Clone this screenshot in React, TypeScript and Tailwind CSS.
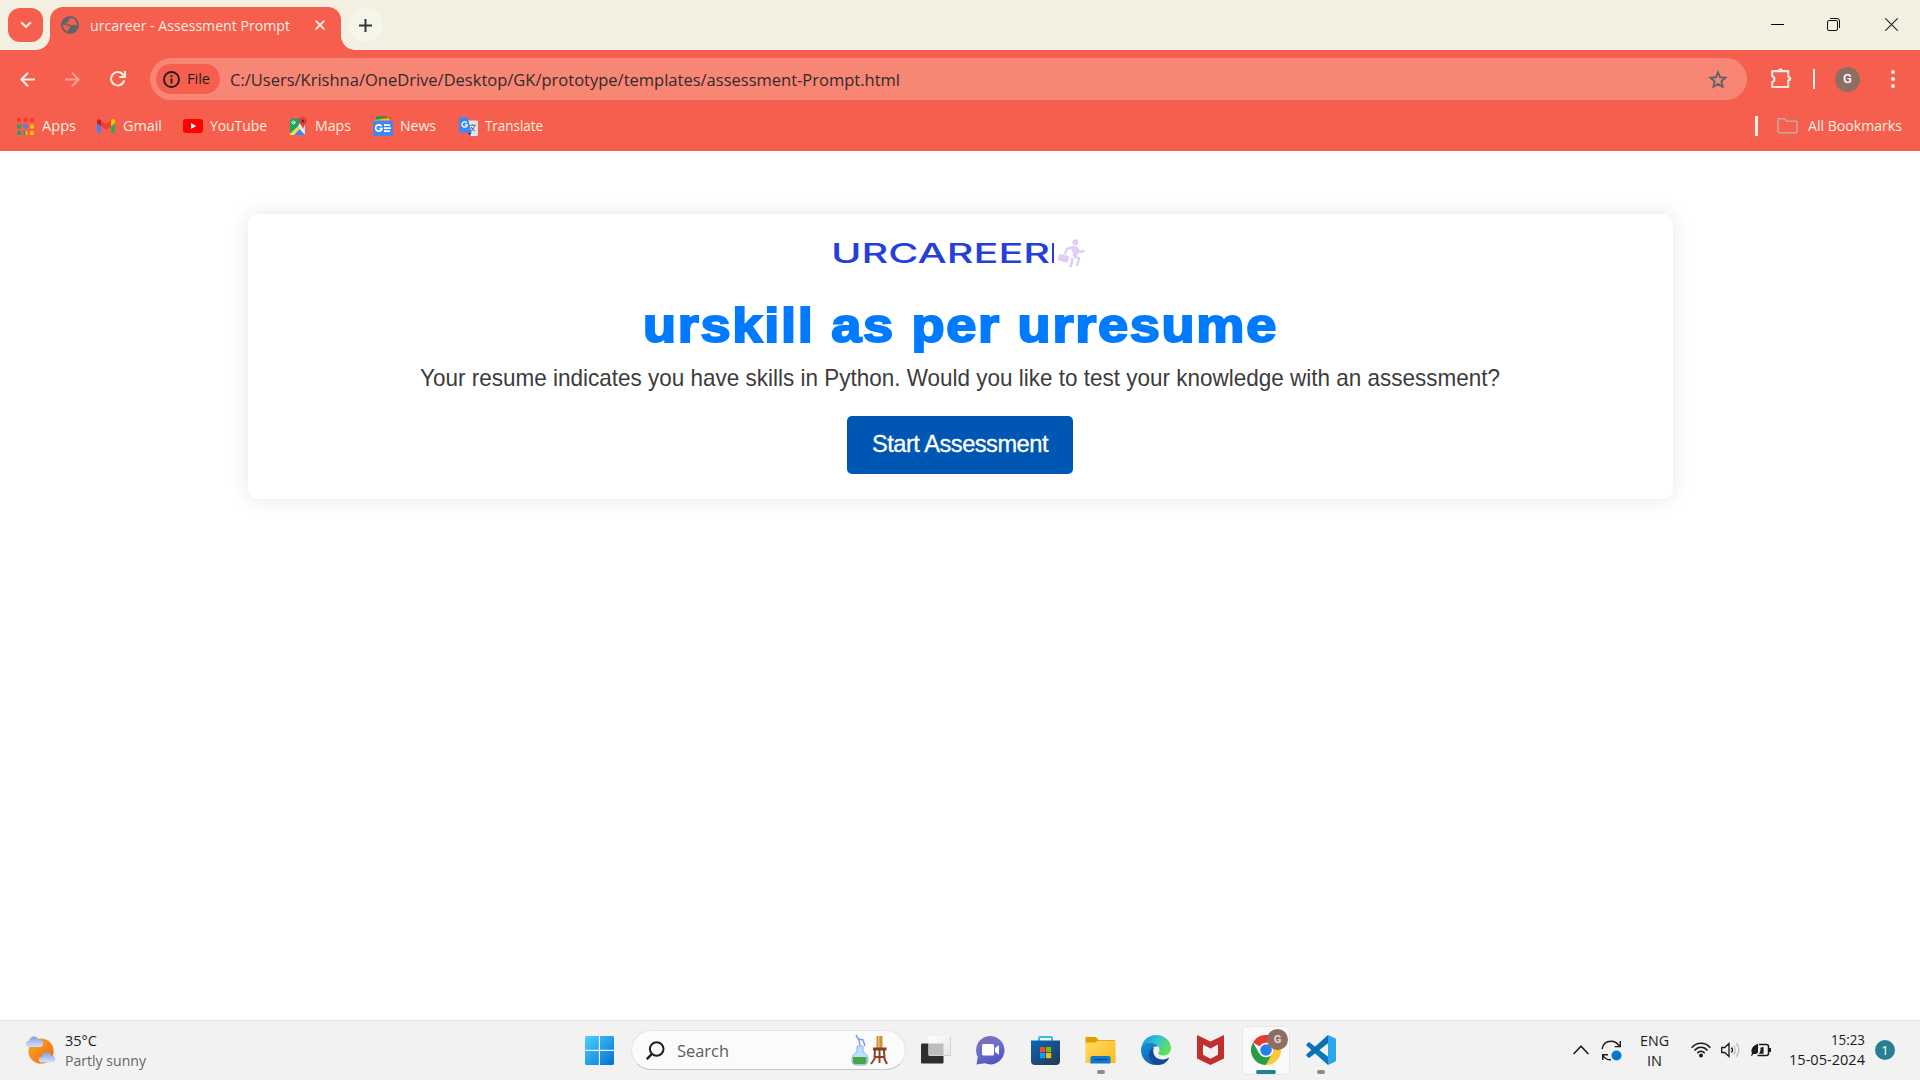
import { useLayoutEffect, useRef, useState } from "react";
import type { ReactNode } from "react";

/* Single line of text, stretched or condensed to the width of its box. */
function Fit({ children, className }: { children: ReactNode; className: string }) {
  const outer = useRef<HTMLSpanElement>(null);
  const inner = useRef<HTMLSpanElement>(null);
  const [scale, setScale] = useState(1);
  useLayoutEffect(() => {
    if (outer.current && inner.current) {
      setScale(outer.current.offsetWidth / inner.current.getBoundingClientRect().width);
    }
  }, []);
  return (
    <span ref={outer} className={`block shrink-0 whitespace-nowrap ${className}`}>
      <span ref={inner} className="inline-block origin-left" style={{ transform: `scaleX(${scale})` }}>
        {children}
      </span>
    </span>
  );
}

function TabStrip() {
  return (
    <div className="flex h-[50px] items-start bg-[#f3f0e1] pl-2">
      <button className="mt-2 flex h-[34px] w-[35px] items-center justify-center rounded-[12px] bg-[#f65f4d]">
        <svg width="12" height="8" viewBox="0 0 12 8" fill="none" stroke="#fbeee2" strokeWidth="2.2">
          <path d="M1.2 1.2 6 6l4.8-4.8" />
        </svg>
      </button>
      <div className="relative ml-[7px] mt-[7px] flex h-[43px] w-[291px] items-center rounded-t-[13px] bg-[#f65f4d] pb-[7px] pl-[11px]">
        <div className="absolute bottom-0 -left-[14px] h-[14px] w-[14px] bg-[radial-gradient(circle_at_0_0,transparent_13.5px,#f65f4d_14.2px)]" />
        <div className="absolute bottom-0 -right-[14px] h-[14px] w-[14px] bg-[radial-gradient(circle_at_100%_0,transparent_13.5px,#f65f4d_14.2px)]" />
        <svg width="18" height="18" viewBox="0 0 18 18">
          <circle cx="9" cy="9" r="9" fill="#5f6368" />
          <path d="M2 8.2 6.2 9.4c1.6.2 2.8.6 2.8 2.1 0 1.4-1.2 1.6-1.9 2.2-.5.5-.5 1.6-.4 2.1C3.8 14.700 2 12 2 8.200ZM10 2.100c-.6.9-2 .8-2.400 1.600-.5 1 .3 1.500-.2 2.200-.6.700-2 .4-2.100 1.500 0 .8 1.400.9 2.700.9 1.200 0 1.500.9 2.500 1 1 .1 1.500-.7 2.600-.6 1.200.1 1.300 1.100 2.600 1.200.8-4-2.100-7.600-5.700-7.800Z" fill="#f65f4d" />
        </svg>
        <Fit className="ml-[11px] mt-[2px] w-[200px] font-['Open_Sans',sans-serif] text-[14.5px] leading-5 text-[#fbeee2]">urcareer - Assessment Prompt</Fit>
        <svg className="ml-[25px]" width="10" height="10" viewBox="0 0 10 10" stroke="#fbeee2" strokeWidth="1.9">
          <path d="m.6.6 8.800 8.800M9.400.6.6 9.400" />
        </svg>
      </div>
      <button className="ml-[7px] mt-2 flex h-[34px] w-[35px] items-center justify-center rounded-full bg-[#f6f5ea]">
        <svg width="13" height="13" viewBox="0 0 13 13" stroke="#2c3640" strokeWidth="2">
          <path d="M6.500 0v13M0 6.500h13" />
        </svg>
      </button>
      <div className="ml-auto flex h-[49px] items-center pr-[22px]">
        <svg width="13" height="13" viewBox="0 0 13 13" stroke="#000" shapeRendering="crispEdges">
          <path d="M0 6.500h13" />
        </svg>
        <svg className="ml-[43px]" width="13" height="13" viewBox="0 0 13 13" fill="none" stroke="#111">
          <rect x=".5" y="2.500" width="10" height="10" rx="1.500" />
          <path d="M3 .5h7a2.500 2.500 0 0 1 2.500 2.500v7" />
        </svg>
        <svg className="ml-[45px]" width="13" height="13" viewBox="0 0 13 13" stroke="#222" strokeWidth="1.1">
          <path d="m.3.3 12.400 12.400M12.700.3.3 12.700" />
        </svg>
      </div>
    </div>
  );
}

function Toolbar() {
  return (
    <div className="flex h-[58px] items-center bg-[#f65f4d] pl-[20px] pr-[25px]">
      <svg width="15" height="15" viewBox="0 0 15 15" fill="none" stroke="#fbeee2" strokeWidth="2">
        <path d="M15 7.500H1.500M8 .8 1.400 7.500 8 14.200" />
      </svg>
      <svg className="ml-[30px]" width="15" height="15" viewBox="0 0 15 15" fill="none" stroke="#f9a196" strokeWidth="2">
        <path d="M0 7.500h13.500M7 .8l6.600 6.700L7 14.200" />
      </svg>
      <svg className="ml-[30px]" width="16" height="16" viewBox="0 0 16 16" fill="none" stroke="#fbeee2" strokeWidth="2">
        <path d="M14.300 9.200A6.700 6.700 0 1 1 13 3.500l1 1.200" />
        <path d="M15 0v6H9.200" />
      </svg>
      <div className="ml-[24px] flex h-[42px] w-[1597px] items-center rounded-full bg-[#f88675] pl-[6px]">
        <div className="flex h-[30px] w-[64px] items-center rounded-full bg-[#f65f4d] pl-[7px]">
          <svg width="17" height="17" viewBox="0 0 17 17" fill="none" stroke="#1f1f1f" strokeWidth="1.900">
            <circle cx="8.500" cy="8.500" r="7.500" />
            <path d="M8.500 7.500v5M8.500 4.300v1.900" />
          </svg>
          <Fit className="ml-[7px] w-[23px] font-['Open_Sans',sans-serif] text-[14.5px] leading-5 text-[#1f1f1f]">File</Fit>
        </div>
        <Fit className="ml-[10px] mt-[1px] w-[670px] font-['Open_Sans',sans-serif] text-[17px] leading-6 text-[#332a2e]">C:/Users/Krishna/OneDrive/Desktop/GK/prototype/templates/assessment-Prompt.html</Fit>
        <svg className="ml-auto mr-[19px]" width="20" height="19" viewBox="0 0 20 19" fill="none" stroke="#5f6368" strokeWidth="1.900">
          <path d="m10 2.300 2.100 5 5.400.5-4.100 3.600 1.200 5.300-4.600-2.800-4.600 2.800 1.200-5.300-4.100-3.600 5.400-.5Z" />
        </svg>
      </div>
      <svg className="mb-[2px] ml-[24px]" width="22" height="22" viewBox="0 0 22 22" fill="none" stroke="#f4e6e4" strokeWidth="2.200" strokeLinejoin="round">
        <path d="M1.200 4.200h16v5.500a2 2 0 0 1 0 3.900v6.400h-16v-5a3 3 0 0 0 0-5.800Z" />
        <path d="M7.200 3.500a2.300 2.300 0 0 1 4.600 0ZM18 9.400a2.300 2.300 0 0 1 0 4.600Z" fill="#f4e6e4" stroke="none" />
      </svg>
      <div className="ml-[20px] h-[20px] w-[2px] bg-[#fbeee2]" />
      <div className="ml-[20px] flex h-[25px] w-[25px] items-center justify-center rounded-full bg-[#8d6e63] font-['Roboto',sans-serif] text-[13px] font-medium text-white">G</div>
      <svg className="ml-auto" width="4" height="18" viewBox="0 0 4 18" fill="#fbeee2">
        <circle cx="2" cy="2" r="2" />
        <circle cx="2" cy="9" r="2" />
        <circle cx="2" cy="16" r="2" />
      </svg>
    </div>
  );
}

const label = "font-['Open_Sans',sans-serif] text-[14.5px] leading-5 text-[#fdf0e0]";

function BookmarksBar() {
  return (
    <div className="flex h-[43px] items-center bg-[#f65f4d] pb-[7px] pl-[17px] pr-[18px]">
      <svg width="17" height="17" viewBox="0 0 17 17">
        <path d="M0 0h4v4H0zM6.500 0h4v4h-4zM13 0h4v4h-4z" fill="#f53b35" />
        <path d="M0 6.500h4v4H0z" fill="#1ea362" />
        <path d="M6.500 6.500h4v4h-4z" fill="#4285f4" />
        <path d="M13 6.500h4v4h-4z" fill="#fbbc04" />
        <path d="M0 13h4v4H0zM6.500 13h4v4h-4z" fill="#1ea362" />
        <path d="M13 13h4v4h-4zM8.500 13h2v4h-2z" fill="#fbbc04" />
      </svg>
      <Fit className={`${label} ml-[8px] w-[34px]`}>Apps</Fit>
      <svg className="ml-[21px]" width="18" height="14" viewBox="0 0 18 14">
        <path d="M0 3v9.500c0 .9.500 1.500 1.300 1.500H4V5Z" fill="#4285f4" />
        <path d="M18 3v9.500c0 .9-.5 1.500-1.300 1.500H14V5Z" fill="#34a853" />
        <path d="M14 1.200V7.300l4-3V2.200C18 .3 16-.7 14.500.700Z" fill="#fbbc04" />
        <path d="M4 1.200 9 5l5-3.800v6.100L9 11 4 7.300Z" fill="#ea4335" />
        <path d="M0 2.200v2.100l4 3V1.200L3.500.7C2-.5 0 .3 0 2.200Z" fill="#c5221f" />
      </svg>
      <Fit className={`${label} ml-[8px] w-[39px]`}>Gmail</Fit>
      <svg className="ml-[21px]" width="20" height="14" viewBox="0 0 20 14">
        <rect width="20" height="14" rx="3.200" fill="#f00" />
        <path d="m8 4 5.200 3L8 10Z" fill="#fff" />
      </svg>
      <Fit className={`${label} ml-[7px] w-[57px]`}>YouTube</Fit>
      <svg className="ml-[22px]" width="18" height="19" viewBox="0 0 18 19">
        <path d="M2 2h12l2 2v13l-1 1H1V3Z" fill="#e8eaed" />
        <path d="M2 1.500h11L9 9.500l-8 7.500V3Z" fill="#1ea362" />
        <path d="M1 17 9 9.500l2 2L4 18H2Z" fill="#fdd835" />
        <path d="M5 18 10.500 12l5.500 6Z" fill="#4285f4" />
        <path d="M13.800 0A4 4 0 0 1 18 4c0 2.500-3.400 4-4 8.500-.8-4.500-4.200-6-4.200-8.500A4 4 0 0 1 13.800 0Z" fill="#db4437" />
        <circle cx="13.900" cy="4" r="1.500" fill="#7b231e" />
        <path d="M6.800 5.200h-2v1h.9A1.500 1.500 0 1 1 5.500 4.600" fill="none" stroke="#fff" strokeWidth=".9" />
      </svg>
      <Fit className={`${label} ml-[8px] w-[36px]`}>Maps</Fit>
      <svg className="ml-[22px]" width="20" height="20" viewBox="0 0 20 20">
        <path d="M3 .5 14 0v7H3Z" fill="#0c9d58" />
        <path d="m8 2 10-1-1 6H8Z" fill="#ea4335" />
        <path d="m1 4 15-2 2 5H1Z" fill="#fbbc04" />
        <rect y="4.500" width="20" height="15.500" rx="1.500" fill="#4285f4" />
        <path d="M8.500 10.200A3.200 3.200 0 1 0 9 12.500H6.300M11 9.200h6M11 12.200h7M11 15.200h6" fill="none" stroke="#fff" strokeWidth="1.700" />
      </svg>
      <Fit className={`${label} ml-[7px] w-[36px]`}>News</Fit>
      <svg className="ml-[23px]" width="19" height="19" viewBox="0 0 19 19">
        <path d="M7 3.500h11a1 1 0 0 1 1 1V18a1 1 0 0 1-1 1h-7Z" fill="#e4e6ea" />
        <path d="M10.500 8.200h6.500M13.700 7v1.200M15.800 8.500c-.4 2.500-2 4.200-4 5.500M12 10c.8 1.800 2 3 4 4" fill="none" stroke="#6b7780" strokeWidth="1.100" />
        <path d="M1 0h7.500l4 15.500H1a1 1 0 0 1-1-1V1a1 1 0 0 1 1-1Z" fill="#4285f4" />
        <path d="M8.500 15.500h4L11 19Z" fill="#174ea6" />
        <path d="M7.700 6A2.600 2.600 0 1 0 8.200 7.900H5.800" fill="none" stroke="#fff" strokeWidth="1.300" />
      </svg>
      <Fit className={`${label} ml-[7px] w-[58px]`}>Translate</Fit>
      <div className="ml-auto h-[20px] w-[3px] bg-[#fdf0e0]" />
      <svg className="ml-[19px]" width="21" height="16" viewBox="0 0 21 16" fill="none" stroke="#c3aa9f" strokeWidth="1.500">
        <path d="M1 1.800a1 1 0 0 1 1-1h5.500l2 2.500H19a1 1 0 0 1 1 1v9.400a1 1 0 0 1-1 1H2a1 1 0 0 1-1-1Z" />
      </svg>
      <Fit className={`${label} ml-[10px] w-[94px]`}>All Bookmarks</Fit>
    </div>
  );
}

function AssessmentCard() {
  return (
    <main className="ml-[248px] flex h-[285px] w-[1425px] flex-col items-center rounded-[10px] bg-white pr-px shadow-[0_0_20px_rgba(0,0,0,0.1)]">
      <div className="mr-[4px] mt-[24px] flex h-[30px] items-center">
        <Fit className="mt-[2px] w-[219px] font-['Inter',sans-serif] text-[27px] font-medium leading-[30px] text-[#2440d8]">URCAREER</Fit>
        <div className="ml-[2px] h-[20px] w-[2px] bg-[#2440d8]" />
        <svg className="ml-[4px]" width="27" height="29" viewBox="0 0 27 29" fill="#dfcff8">
          <circle cx="17.400" cy="3.200" r="2.900" />
          <rect x=".3" y="16.200" width="10.500" height="6.500" rx="1" transform="rotate(14 6 19)" />
          <path d="M5 16.500c0-2 3.500-1.500 3.500.6" fill="none" stroke="#dfcff8" />
          <path d="m13.500 9.500 4-.8 2 3.300-3.500 5.500" stroke="#dfcff8" strokeWidth="3.800" strokeLinejoin="round" />
          <path d="m15 8.300-6 1.400L7 14.500M18 9l3.300 3.800 5.200-.8M15.500 17l5.500 2.500-2 7.500M14 19v4.500l-2 4.800" fill="none" stroke="#dfcff8" strokeWidth="2.500" strokeLinejoin="round" />
        </svg>
      </div>
      <h1 className="mt-[26px]">
        <Fit className="w-[635px] font-['Liberation_Sans',Arial,sans-serif] text-[48px] font-bold leading-[64px] tracking-[1.5px] text-[#007bff] [-webkit-text-stroke:2px_#007bff]">urskill as per urresume</Fit>
      </h1>
      <p className="mt-[4px]">
        <Fit className="w-[1080px] font-['Liberation_Sans',Arial,sans-serif] text-[24px] leading-[32px] text-[#3c3c3c]">
          Your resume indicates you have skills in Python. Would you like to test your knowledge with an assessment?
        </Fit>
      </p>
      <button className="mt-[22px] flex h-[58px] w-[226px] items-center justify-center rounded-[5px] bg-[#0056b3] pb-[2px]">
        <Fit className="w-[176px] text-left font-['Liberation_Sans',Arial,sans-serif] text-[24px] leading-[28px] tracking-[-0.5px] text-white [-webkit-text-stroke:0.3px_#fff]">Start Assessment</Fit>
      </button>
    </main>
  );
}

function Taskbar() {
  return (
    <footer className="flex h-[60px] items-center border-t border-[#e2e2e2] bg-[#f2f2f2] pb-px font-['Open_Sans',sans-serif] text-[14.5px] leading-5 text-[#1b1b1b]">
      <svg className="ml-[26px]" width="30" height="28" viewBox="0 0 30 28">
        <defs>
          <linearGradient id="sun" x1="0" y1="0" x2="1" y2="1"><stop stopColor="#f6b02c" /><stop offset="1" stopColor="#f0620f" /></linearGradient>
          <linearGradient id="cloud" x1="0" y1="0" x2="0" y2="1"><stop stopColor="#7f9fe0" /><stop offset="1" stopColor="#d3e2fa" /></linearGradient>
        </defs>
        <circle cx="15" cy="15" r="12.600" fill="url(#sun)" />
        <path d="M3 11a3 3 0 0 1-.2-6C4 1.500 5.800.5 8 .5c2.600 0 4.200 1.500 4.700 3.600A3.500 3.500 0 0 1 14.500 11Z" fill="url(#cloud)" />
        <path d="M15.500 26.500a2.800 2.800 0 0 1 .2-5.600c.8-3.500 2.600-4.900 5-4.900 2.300 0 4 1.500 4.500 3.900 4.800-.5 5.800 5.600 1.600 6.600Z" fill="url(#cloud)" />
      </svg>
      <div className="ml-[9px] w-[82px] pt-[2px]">
        <Fit className="w-[32px]">35°C</Fit>
        <Fit className="w-[81px] text-[#666]">Partly sunny</Fit>
      </div>

      <svg className="ml-[438px]" width="29" height="29" viewBox="0 0 29 29">
        <defs>
          <linearGradient id="win" x1="0" y1="0" x2="29" y2="29" gradientUnits="userSpaceOnUse"><stop stopColor="#4fd0ff" /><stop offset="1" stopColor="#0070d0" /></linearGradient>
        </defs>
        <path d="M1 0h12.800v13.800H0V1ZM15 0h13l1 1v12.800H15ZM0 15h13.800v14H1l-1-1ZM15 15h14v13l-1 1H15Z" fill="url(#win)" />
      </svg>
      <div className="ml-[17px] flex h-[40px] w-[275px] items-center rounded-full border border-[#e3e3e3] border-b-[#c6c6c6] bg-[#fbfbfb]">
        <svg className="ml-[14px]" width="19" height="19" viewBox="0 0 19 19" fill="none" stroke="#1f1f1f" strokeWidth="2">
          <circle cx="10.700" cy="8" r="6.800" />
          <path d="M5.800 13 .8 18.200" strokeWidth="2.500" />
        </svg>
        <Fit className="ml-[12px] mt-[1px] w-[52px] text-[17px] leading-6 text-[#5c5c5c]">Search</Fit>
        <svg className="ml-auto mr-[17px]" width="37" height="32" viewBox="0 0 37 32">
          <path d="m5 1 3 5 1 6M8 5l4 1 2 6" fill="none" stroke="#7aa3e8" strokeWidth="1.500" />
          <path d="M6 12h6v6c4 2 5 5 5 8s-1.500 5-4 5H5c-2.500 0-4-2-4-5s1-6 5-8Z" fill="#b9e4f7" stroke="#8bb5ef" />
          <path d="M2 23h13.500v5a2 2 0 0 1-2 2H4a2 2 0 0 1-2-2Z" fill="#4aa544" />
          <path d="M25.500 2h6v12h-6Z" fill="#c6953e" />
          <path d="M27 2h1.500v12H27Z" fill="#e5bf6a" />
          <path d="M22 13.500h13.500v3H22Z" fill="#83401f" />
          <path d="m24 16-.5 9-3.500 5M28.500 16v13M33 16l.5 9 2.500 5M23.500 23h10" fill="none" stroke="#8d4420" strokeWidth="2" />
        </svg>
      </div>
      <svg className="ml-[15px]" width="30" height="28" viewBox="0 0 30 28">
        <defs>
          <linearGradient id="pane" x1="0" y1="0" x2="1" y2="1"><stop stopColor="#fff" /><stop offset="1" stopColor="#e6e6e6" /></linearGradient>
        </defs>
        <rect y="7.500" width="22.500" height="20" rx="1" fill="#2e2e2e" />
        <rect x="7.500" width="22" height="19.500" rx="1" fill="url(#pane)" />
        <rect x="7.500" y="7.500" width="15" height="12" fill="#bdbdbd" />
        <path d="M29.500 1v18.500H8" fill="none" stroke="#d0d0d0" />
      </svg>
      <svg className="ml-[25px]" width="29" height="29" viewBox="0 0 29 29">
        <defs>
          <linearGradient id="chat" x1="0" y1="0" x2=".4" y2="1"><stop stopColor="#8e62a7" /><stop offset=".45" stopColor="#6d73cc" /><stop offset="1" stopColor="#5655c4" /></linearGradient>
        </defs>
        <path d="M14.500 0a14.200 14.200 0 1 1-5.700 27.300L.5 28.500 1.800 21A14.200 14.200 0 0 1 14.500 0Z" fill="url(#chat)" />
        <rect x="6" y="8" width="12" height="11.500" rx="1.500" fill="#fff" />
        <path d="m19 12 4-2.800v9.500l-4-2.800Z" fill="#fff" />
      </svg>
      <svg className="ml-[26px]" width="29" height="29" viewBox="0 0 29 29">
        <defs>
          <linearGradient id="store" x1="0" y1="0" x2=".8" y2="1"><stop stopColor="#0b67b8" /><stop offset="1" stopColor="#243a5e" /></linearGradient>
        </defs>
        <path d="M8 5V2a1 1 0 0 1 1-1h11a1 1 0 0 1 1 1v3" fill="none" stroke="#32bdf0" strokeWidth="2" />
        <path d="M0 4.500h29V25a4 4 0 0 1-4 4H4a4 4 0 0 1-4-4Z" fill="url(#store)" />
        <path d="M9 11h5.200v5.200H9Z" fill="#f25022" />
        <path d="M15 11h5.200v5.200H15Z" fill="#7fba00" />
        <path d="M9 17h5.200v5.200H9Z" fill="#00a4ef" />
        <path d="M15 17h5.200v5.200H15Z" fill="#ffb900" />
      </svg>
      <div className="ml-[25px] flex h-[48px] flex-col items-center justify-end">
        <svg width="31" height="27" viewBox="0 0 31 27">
          <defs>
            <linearGradient id="folder" x1="0" y1="0" x2="1" y2="1"><stop stopColor="#ffdb65" /><stop offset="1" stopColor="#fbb917" /></linearGradient>
          </defs>
          <path d="M1 0h10l2.500 3H30v5H.500V1Z" fill="#dfa000" />
          <path d="M.5 5.500h9.500l3-1.700h17.500V26H.500Z" fill="url(#folder)" />
          <path d="M5.500 26.500V21a2 2 0 0 1 2-2h16a2 2 0 0 1 2 2v5.500Z" fill="#0f78d0" />
          <path d="M9 22.500h13" stroke="#084c94" strokeWidth="1.200" />
        </svg>
        <div className="mt-[6px] h-[4px] w-[8px] rounded-full bg-[#8a8a8a]" />
      </div>
      <svg className="ml-[25px]" width="30" height="30" viewBox="0 0 30 30">
        <defs>
          <linearGradient id="edgeTop" x1="0" y1="0" x2="1" y2=".5"><stop stopColor="#1689d8" /><stop offset=".5" stopColor="#30c1d8" /><stop offset="1" stopColor="#62e05a" /></linearGradient>
          <linearGradient id="edgeLeft" x1="0" y1="0" x2=".6" y2="1"><stop stopColor="#1593dd" /><stop offset="1" stopColor="#0c60b3" /></linearGradient>
        </defs>
        <path d="M.3 13C1.500 5 8 0 15 0c9 0 15 6.500 15 13 0 5-4 7.500-8 7.500-3 0-4.700-1-4.700-2.200 0-.9 1.200-1.400 1.200-3.300C18.500 10.500 13 7.500 8.500 7.500 4.500 7.500 1.500 10 .3 13Z" fill="url(#edgeTop)" />
        <path d="M0 15C0 10 4 7.500 8.500 7.500c3.500 0 7 1.500 8.800 4C13 10.500 10 14 10 18c0 6 4.500 10 9 11-1.200.7-2.500 1-4 1C6 30 0 23 0 15Z" fill="url(#edgeLeft)" />
        <path d="M13 12.500c-2 3-.5 12 8 12 3 0 5-1 6.300-1.600.5-.2.900.2.600.7C25.500 27.500 22 30 17.500 30 12 29.500 8 25 8 19.500c0-3.500 2-6 5-7Z" fill="#124d91" />
      </svg>
      <svg className="ml-[26px]" width="27" height="30" viewBox="0 0 27 30">
        <path fillRule="evenodd" fill="#c22d2d" d="m0 0 13.500 6.500L27 0v23.500L13.500 30 0 23.500Zm6 9.500v10.300l7.500 3.900 7.500-3.900V9.500l-7.500 4Z" />
      </svg>
      <div className="relative ml-[18px] flex h-[49px] w-[48px] flex-col items-center justify-end rounded-[5px] border border-[#e7e7e7] bg-[#fafafa]">
        <svg width="30" height="30" viewBox="0 0 30 30">
          <path d="M15 15 2 7.500A15 15 0 0 1 28 7.500Z" fill="#e33b2e" />
          <path d="M2 7.500A15 15 0 0 0 15 30l6.500-11.300L15 15 8.500 18.700Z" fill="#2a9c48" />
          <path d="M15 7.500h13A15 15 0 0 1 15 30l6.500-11.200Z" fill="#fcc934" />
          <circle cx="15" cy="15" r="7.300" fill="#fff" />
          <circle cx="15" cy="15" r="5.800" fill="#2b7de9" />
        </svg>
        <div className="mt-[5px] h-[4px] w-[20px] rounded-full bg-[#26808f]" />
        <div className="absolute left-[24px] top-[2px] flex h-[21px] w-[21px] items-center justify-center rounded-full bg-[#8d6e63] font-['Roboto',sans-serif] text-[11px] font-bold leading-none text-[#e6dad5]">G</div>
      </div>
      <div className="ml-[16px] flex h-[48px] flex-col items-center justify-end">
        <svg width="30" height="30" viewBox="0 0 30 30">
          <path d="M.5 9.300 2.300 7.500c.5-.4 1-.4 1.500 0L22 21.800V30L.6 10.800c-.5-.5-.5-1 0-1.500Z" fill="#0879bf" />
          <path d="M.5 20.700 2.300 22.500c.5.4 1 .4 1.500 0L22 8.200V0L.6 19.200c-.5.500-.5 1-.1 1.500Z" fill="#0a6fb3" />
          <path d="m22 0 7 3.200c.6.300 1 .8 1 1.500v20.600c0 .7-.4 1.200-1 1.500L22 30Z" fill="#2aa5ee" />
        </svg>
        <div className="mt-[5px] h-[4px] w-[8px] rounded-full bg-[#8a8a8a]" />
      </div>

      <svg className="ml-auto" width="16" height="10" viewBox="0 0 16 10" fill="none" stroke="#1b1b1b" strokeWidth="1.500">
        <path d="m.6 9 7.400-7.800L15.400 9" />
      </svg>
      <svg className="ml-[12px]" width="21" height="21" viewBox="0 0 21 21" fill="none" stroke="#1b1b1b" strokeWidth="1.400">
        <path d="M1 9C2 4 5.500 1.200 10 1.200c3.500 0 6.500 1.800 8.500 5M19.300 1v5.600h-5.600M1.700 20v-5.200H7M2 15.500c1.500 2.800 4.500 4.300 8 4.300" />
        <circle cx="15.500" cy="15.500" r="5" fill="#0078d4" stroke="none" />
      </svg>
      <div className="ml-[18px] flex w-[28px] flex-col items-center pt-[2px]">
        <Fit className="w-[29px]">ENG</Fit>
        <Fit className="w-[15px]">IN</Fit>
      </div>
      <svg className="ml-[23px]" width="20" height="16" viewBox="0 0 20 16" fill="none" stroke="#1b1b1b" strokeWidth="1.500">
        <path d="M.6 5.800C5.600-.3 14.400-.3 19.400 5.800M3.500 8.500c3.600-4.300 9.400-4.300 13 0M6.300 11.200c2.100-2.500 5.300-2.500 7.400 0" />
        <circle cx="10" cy="13.500" r="1.900" fill="#1b1b1b" stroke="none" />
      </svg>
      <svg className="ml-[10px]" width="20" height="16" viewBox="0 0 20 16" fill="none" stroke="#1b1b1b" strokeWidth="1.300">
        <path d="M.7 5.500h3L8 1.500v13l-4.300-4h-3ZM10.500 5.500c1.200 1.500 1.200 3.500 0 5" />
        <path d="M12.700 3.500c2 2.500 2 6.500 0 9M15.200 1.200c3.500 3.800 3.500 9.800 0 13.600" stroke="#bdbdbd" />
      </svg>
      <svg className="ml-[10px]" width="20" height="16" viewBox="0 0 20 16" fill="none" stroke="#1b1b1b" strokeWidth="1.500">
        <path d="M8 2.500h7.500a2 2 0 0 1 2 2v7a2 2 0 0 1-2 2H6.500M10 5.500c.8 2 .5 4-.7 5.500h2.500V5" />
        <path d="M19 6v4" strokeWidth="2" />
        <path d="M7 1.500v9C5.500 12.500 3.500 12 2.500 12L.8 14 0 13.200l1-1.700C-1 7 2.500 3.500 7 1.500Z" fill="#1b1b1b" stroke="none" />
      </svg>
      <div className="ml-[18px] flex w-[76px] flex-col items-end pb-px">
        <Fit className="w-[34px]">15:23</Fit>
        <Fit className="w-[76px]">15-05-2024</Fit>
      </div>
      <div className="ml-[10px] mr-[25px] flex h-[20px] w-[20px] items-center justify-center rounded-full bg-[#26808f] text-[13px] leading-none text-white">1</div>
    </footer>
  );
}

export default function App() {
  return (
    <div className="flex h-[1080px] w-[1920px] flex-col overflow-hidden bg-white">
      <TabStrip />
      <Toolbar />
      <BookmarksBar />
      <div className="flex-1 pt-[63px]">
        <AssessmentCard />
      </div>
      <Taskbar />
    </div>
  );
}
